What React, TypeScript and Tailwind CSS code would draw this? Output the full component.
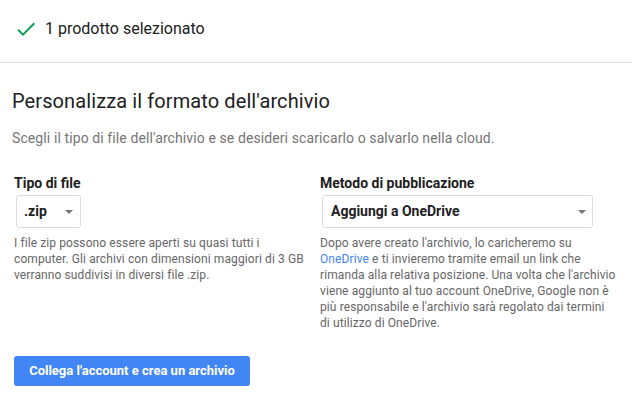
import React from "react";

function Check() {
  return (
    <svg width="24" height="24" viewBox="0 0 24 24" className="shrink-0">
      <path d="M9 16.17L4.83 12l-1.42 1.42L9 19 21 7l-1.41-1.41z" fill="#0f9d58" />
    </svg>
  );
}

function Arrow() {
  return (
    <svg width="8" height="4" viewBox="0 0 8 4" className="shrink-0">
      <path d="M0 0h8L4 4z" fill="#757575" />
    </svg>
  );
}

export default function App() {
  return (
    <div
      className="w-[632px] h-[394px] bg-white overflow-hidden text-[#212121]"
      style={{ fontFamily: "Roboto, 'Liberation Sans', sans-serif" }}
    >
      <header className="h-[63px] border-b border-[#e0e0e0] pl-[14px] pt-[17px]">
        <div className="flex items-center h-[24px]">
          <Check />
          <span className="ml-[7px] text-[16px] leading-[24px] text-[#212121]">1 prodotto selezionato</span>
        </div>
      </header>
      <main className="pl-3">
        <h2 className="mt-[24px] text-[20px] leading-[28px] tracking-[0.1px] font-normal text-[#212121]">
          Personalizza il formato dell'archivio
        </h2>
        <p className="mt-[13px] text-[14px] leading-[20px] tracking-[0.1px] text-[#757575]">
          Scegli il tipo di file dell'archivio e se desideri scaricarlo o salvarlo nella cloud.
        </p>
        <div className="mt-[25px] ml-[2px] grid grid-cols-[296px_296px] gap-x-[10px]">
          <div>
            <div className="text-[14px] leading-[20px] font-bold text-[#212121]">Tipo di file</div>
            <div className="mt-[2px] ml-[2px] w-[65px] h-[33px] border border-[#dadce0] rounded-[3px] flex items-center justify-between pl-[7px] pr-[7px]">
              <span className="text-[14px] font-bold text-[#212121]">.zip</span>
              <Arrow />
            </div>
            <p className="mt-[7px] text-[12px] leading-[16px] tracking-[0.1px] text-[#666666]">
              I file zip possono essere aperti su quasi tutti i computer. Gli archivi con dimensioni maggiori di 3 GB
              verranno suddivisi in diversi file .zip.
            </p>
          </div>
          <div>
            <div className="text-[14px] leading-[20px] font-bold text-[#212121]">Metodo di pubblicazione</div>
            <div className="mt-[2px] ml-[2px] w-[271px] h-[33px] border border-[#dadce0] rounded-[3px] flex items-center justify-between pl-[8px] pr-[6px]">
              <span className="text-[14px] font-bold text-[#212121]">Aggiungi a OneDrive</span>
              <Arrow />
            </div>
            <p className="mt-[7px] text-[12px] leading-[16px] tracking-[0.1px] text-[#666666]">
              Dopo avere creato l'archivio, lo caricheremo su <span className="text-[#4285f4]">OneDrive</span> e ti
              invieremo tramite email un link che rimanda alla relativa posizione. Una volta che l'archivio viene
              aggiunto al tuo account OneDrive, Google non è più responsabile e l'archivio sarà regolato dai termini di
              utilizzo di OneDrive.
            </p>
          </div>
        </div>
        <button className="mt-[25px] ml-[2px] w-[236px] h-[30px] bg-[#4285f4] rounded-[3px] text-white text-[13px] font-bold flex items-center justify-center">
          Collega l'account e crea un archivio
        </button>
      </main>
    </div>
  );
}
